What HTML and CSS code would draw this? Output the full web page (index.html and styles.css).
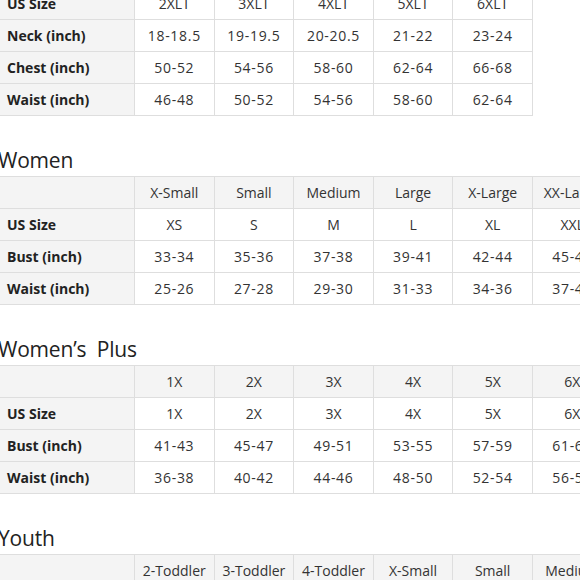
FILE: index.html
```html
<!DOCTYPE html>
<html>
<head>
<meta charset="utf-8">
<link rel="stylesheet" href="styles.css">
</head>
<body>
<div class="page">
  <section class="chart chart-first">
    <table class="size-table cols5">
      <colgroup><col class="c-label"><col class="c-val"><col class="c-val"><col class="c-val"><col class="c-val"><col class="c-val"></colgroup>
      <tr><th class="label">US Size</th><td>2XLT</td><td>3XLT</td><td>4XLT</td><td>5XLT</td><td>6XLT</td></tr>
      <tr><th class="label">Neck (inch)</th><td class="num">18-18.5</td><td class="num">19-19.5</td><td class="num">20-20.5</td><td class="num">21-22</td><td class="num">23-24</td></tr>
      <tr><th class="label">Chest (inch)</th><td class="num">50-52</td><td class="num">54-56</td><td class="num">58-60</td><td class="num">62-64</td><td class="num">66-68</td></tr>
      <tr><th class="label">Waist (inch)</th><td class="num">46-48</td><td class="num">50-52</td><td class="num">54-56</td><td class="num">58-60</td><td class="num">62-64</td></tr>
    </table>
  </section>

  <section class="chart">
    <h2 class="chart-title">Women</h2>
    <table class="size-table cols6">
      <colgroup><col class="c-label"><col class="c-val"><col class="c-val"><col class="c-val"><col class="c-val"><col class="c-val"><col class="c-val"></colgroup>
      <tr class="head"><th class="label"></th><td>X-Small</td><td>Small</td><td>Medium</td><td>Large</td><td>X-Large</td><td>XX-Large</td></tr>
      <tr><th class="label">US Size</th><td>XS</td><td>S</td><td>M</td><td>L</td><td>XL</td><td>XXL</td></tr>
      <tr><th class="label">Bust (inch)</th><td class="num">33-34</td><td class="num">35-36</td><td class="num">37-38</td><td class="num">39-41</td><td class="num">42-44</td><td class="num">45-47</td></tr>
      <tr><th class="label">Waist (inch)</th><td class="num">25-26</td><td class="num">27-28</td><td class="num">29-30</td><td class="num">31-33</td><td class="num">34-36</td><td class="num">37-40</td></tr>
    </table>
  </section>

  <section class="chart">
    <h2 class="chart-title">Women’s&nbsp; Plus</h2>
    <table class="size-table cols6">
      <colgroup><col class="c-label"><col class="c-val"><col class="c-val"><col class="c-val"><col class="c-val"><col class="c-val"><col class="c-val"></colgroup>
      <tr class="head"><th class="label"></th><td>1X</td><td>2X</td><td>3X</td><td>4X</td><td>5X</td><td>6X</td></tr>
      <tr><th class="label">US Size</th><td>1X</td><td>2X</td><td>3X</td><td>4X</td><td>5X</td><td>6X</td></tr>
      <tr><th class="label">Bust (inch)</th><td class="num">41-43</td><td class="num">45-47</td><td class="num">49-51</td><td class="num">53-55</td><td class="num">57-59</td><td class="num">61-63</td></tr>
      <tr><th class="label">Waist (inch)</th><td class="num">36-38</td><td class="num">40-42</td><td class="num">44-46</td><td class="num">48-50</td><td class="num">52-54</td><td class="num">56-58</td></tr>
    </table>
  </section>

  <section class="chart">
    <h2 class="chart-title">Youth</h2>
    <table class="size-table cols6">
      <colgroup><col class="c-label"><col class="c-val"><col class="c-val"><col class="c-val"><col class="c-val"><col class="c-val"><col class="c-val"></colgroup>
      <tr class="head"><th class="label"></th><td>2-Toddler</td><td>3-Toddler</td><td>4-Toddler</td><td>X-Small</td><td>Small</td><td>Medium</td></tr>
      <tr><th class="label">US Size</th><td>2T</td><td>3T</td><td>4T</td><td>XS</td><td>S</td><td>M</td></tr>
    </table>
  </section>
</div>
</body>
</html>
```

FILE: styles.css
```css
html, body {
  margin: 0;
  padding: 0;
  overflow: hidden;
  background: #ffffff;
}

.page {
  width: 580px;
  height: 580px;
  overflow: hidden;
  font-family: "Open Sans", "Noto Sans", sans-serif;
  color: #2a2a2a;
}

.chart {
  margin-top: 31px;
}

.chart-first {
  margin-top: -13px;
  margin-bottom: 28px;
}

.chart-title {
  margin: 0 0 3px -2px;
  font-size: 21px;
  font-weight: 400;
  line-height: 26px;
  color: #222;
  letter-spacing: -0.2px;
}

.size-table {
  margin-left: -1px;
  border-collapse: collapse;
  table-layout: fixed;
  font-size: 14px;
}

.cols5 { width: 533px; }
.cols6 { width: 613px; }

.c-label { width: 135px; }
.c-val { width: 79.6px; }

.size-table th,
.size-table td {
  border: 1px solid #dedede;
  height: 31px;
  padding: 0;
  white-space: nowrap;
  overflow: hidden;
}

.size-table td {
  text-align: center;
  background: #ffffff;
  color: #333;
}

.size-table th.label {
  text-align: left;
  padding-left: 7px;
  font-weight: 700;
  background: #f4f4f4;
  color: #222;
}

.size-table tr.head td {
  background: #f4f4f4;
}

.num {
  letter-spacing: 0.7px;
}
```
